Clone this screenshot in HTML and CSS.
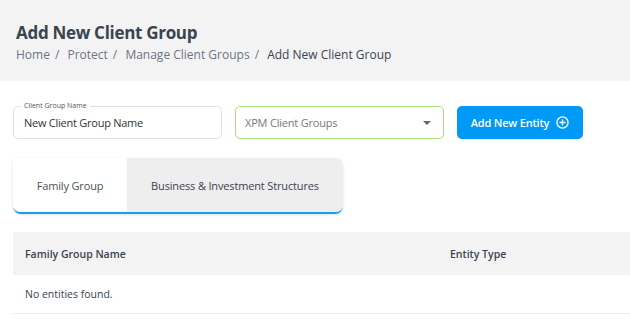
FILE: index.html
```html
<!DOCTYPE html>
<html lang="en">
<head>
  <meta charset="UTF-8">
  <meta name="viewport" content="width=device-width, initial-scale=1.0">
  <title>Add New Client Group</title>
  <link rel="stylesheet" href="styles.css">
</head>
<body>
  <div class="page-header">
    <h1>Add New Client Group</h1>
    <div class="breadcrumb">
      <span>Home</span><span class="sep">/</span>
      <span>Protect</span><span class="sep">/</span>
      <span>Manage Client Groups</span><span class="sep">/</span>
      <span class="current">Add New Client Group</span>
    </div>
  </div>

  <div class="content">
    <div class="form-row">
      <div class="field">
        <label class="field-label">Client Group Name</label>
        <div class="field-input">New Client Group Name</div>
      </div>
      <div class="select">
        <span>XPM Client Groups</span>
        <span class="caret"></span>
      </div>
      <button class="btn-add">
        Add New Entity
        <svg width="13" height="13" viewBox="0 0 14 14">
          <circle cx="7" cy="7" r="6" fill="none" stroke="#fff" stroke-width="1.4"/>
          <path d="M7 3.8v6.4M3.8 7h6.4" stroke="#fff" stroke-width="1.4"/>
        </svg>
      </button>
    </div>

    <div class="tabs">
      <div class="tab active">Family Group</div>
      <div class="tab">Business &amp; Investment Structures</div>
    </div>

    <table class="entities">
      <thead>
        <tr>
          <th class="col-name">Family Group Name</th>
          <th>Entity Type</th>
        </tr>
      </thead>
      <tbody>
        <tr>
          <td colspan="2">No entities found.</td>
        </tr>
      </tbody>
    </table>
  </div>
</body>
</html>
```

FILE: styles.css
```css
body {
  margin: 0;
  font-family: "Open Sans", Arial, sans-serif;
  color: #3a4450;
  background: #fff;
  overflow: hidden;
}
.page-header {
  background-color: #f3f3f3;
  height: 81px;
  padding: 21px 16px 0;
  box-sizing: border-box;
}
h1 {
  margin: 0;
  font-size: 17px;
  font-weight: 700;
  line-height: 23px;
  letter-spacing: -0.3px;
  color: #3a4450;
}
.breadcrumb {
  margin-top: 2px;
  font-size: 12px;
  line-height: 18px;
  color: #6c7680;
}
.breadcrumb .sep {
  margin: 0 5px;
}
.breadcrumb .current {
  color: #3a4450;
}
.content {
  padding: 25px 0 0 13px;
}
.form-row {
  display: flex;
  align-items: center;
  gap: 13px;
}
.field {
  position: relative;
  width: 209px;
  height: 33px;
  border: 1px solid #e2e2e2;
  border-radius: 5px;
  box-sizing: border-box;
}
.field-label {
  position: absolute;
  top: -6px;
  left: 7px;
  padding: 0 3px;
  background: #fff;
  font-size: 7px;
  line-height: 10px;
  color: #555;
}
.field-input {
  padding: 0 10px;
  line-height: 31px;
  font-size: 11px;
  letter-spacing: -0.25px;
  color: #333;
}
.select {
  width: 209px;
  height: 33px;
  border: 1px solid #a6e07c;
  border-radius: 5px;
  box-sizing: border-box;
  display: flex;
  align-items: center;
  justify-content: space-between;
  padding: 0 12px 0 9px;
  font-size: 11px;
  letter-spacing: -0.2px;
  color: #777;
}
.caret {
  width: 0;
  height: 0;
  border-left: 4px solid transparent;
  border-right: 4px solid transparent;
  border-top: 4px solid #666;
}
.btn-add {
  width: 126px;
  height: 33px;
  background-color: #0099f6;
  color: #fff;
  border: none;
  border-radius: 5px;
  font-family: "Open Sans", Arial, sans-serif;
  font-size: 11px;
  font-weight: 600;
  letter-spacing: -0.2px;
  display: flex;
  align-items: center;
  justify-content: center;
  gap: 7px;
  padding: 0;
}
.tabs {
  display: flex;
  width: 330px;
  height: 56px;
  margin-top: 19px;
  border-radius: 0 8px 8px 8px;
  box-shadow: 0 1px 3px rgba(0, 0, 0, 0.12);
  border-bottom: 2px solid #1a9cf3;
  box-sizing: border-box;
  overflow: hidden;
}
.tab {
  display: flex;
  align-items: center;
  justify-content: center;
  font-size: 11px;
  letter-spacing: -0.15px;
  color: #3a4450;
  background-color: #eeeeee;
  flex: 1;
}
.tab.active {
  flex: 0 0 114px;
  background-color: #fff;
  color: #4a525a;
}
.entities {
  width: 617px;
  margin-top: 18px;
  border-collapse: collapse;
  font-size: 10.5px;
}
.entities th {
  background-color: #f3f3f3;
  height: 43px;
  text-align: left;
  font-weight: 600;
  padding: 0 12px;
  color: #3a4450;
}
.entities th.col-name {
  width: 401px;
}
.entities td {
  height: 38px;
  padding: 0 12px;
  border-bottom: 1px solid #ebebeb;
  color: #3a4450;
}
```
